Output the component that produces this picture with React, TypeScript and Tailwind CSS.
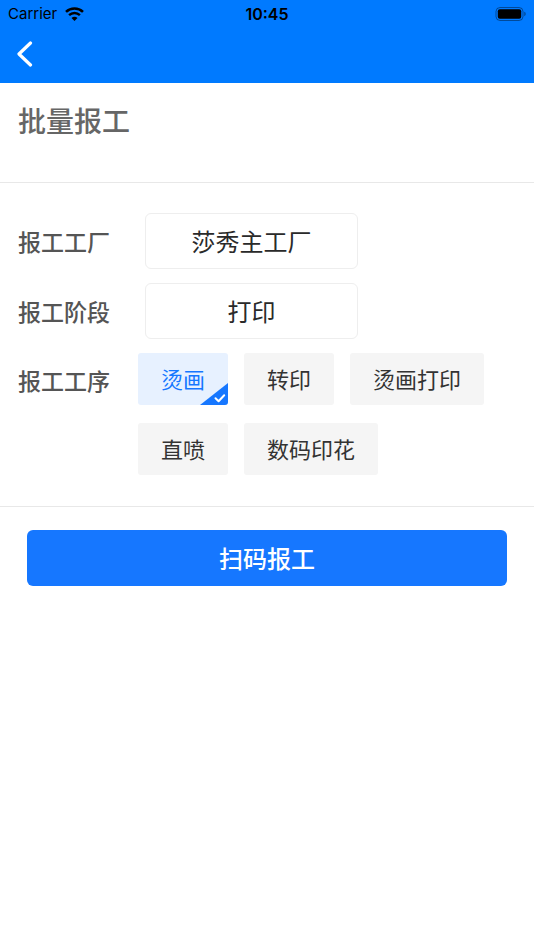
import { useState } from "react";

type Processo = {
  id: number;
  nome: string;
};

/**
 * Processos disponíveis para a etapa atual.
 */
const PROCESSOS: Processo[] = [
  { id: 1, nome: "烫画" },
  { id: 2, nome: "转印" },
  { id: 3, nome: "烫画打印" },
  { id: 4, nome: "直喷" },
  { id: 5, nome: "数码印花" },
];

/**
 * Barra de status do aparelho: operadora, hora e bateria.
 */
function StatusBar() {
  return (
    <div className="grid h-7 grid-cols-3 items-center px-2 font-['Inter','Liberation_Sans',sans-serif] text-[15px] text-black">
      <div className="flex items-center gap-2">
        <span>Carrier</span>
        <svg width="19" height="14" viewBox="0 0 19 14" fill="none" aria-hidden="true">
          <path d="M1 4.9C5.8 0.4 13.2 0.4 18 4.9" stroke="currentColor" strokeWidth="2.6" />
          <path d="M4.1 8.2C7.1 5.3 11.9 5.3 14.9 8.2" stroke="currentColor" strokeWidth="2.4" />
          <path d="M9.5 14L6.5 10.9C8.2 9.4 10.8 9.4 12.5 10.9Z" fill="currentColor" />
        </svg>
      </div>
      <span className="text-center text-base font-semibold">10:45</span>
      <svg
        className="justify-self-end"
        width="31"
        height="14"
        viewBox="0 0 31 14"
        fill="none"
        aria-hidden="true"
      >
        <rect x="1" y="0.5" width="27" height="13" rx="4" stroke="black" strokeOpacity="0.4" />
        <rect x="2.8" y="2.3" width="23.4" height="9.4" rx="2" fill="black" />
        <path d="M29.3 4.8C31.1 5.4 31.1 8.6 29.3 9.2Z" fill="black" fillOpacity="0.45" />
      </svg>
    </div>
  );
}

function PickerRow({ id, label, value }: { id: string; label: string; value: string }) {
  return (
    <div className="flex items-center">
      <label
        htmlFor={id}
        className="w-[127px] shrink-0 text-[23px] leading-[54px] font-medium text-[#555]"
      >
        {label}
      </label>
      <button
        id={id}
        type="button"
        className="h-14 w-[213px] rounded-md border border-[#eee] bg-white text-2xl text-[#2a2a2a]"
      >
        {value}
      </button>
    </div>
  );
}

export default function App() {
  const [processo, setProcesso] = useState(1);

  return (
    <div className="min-h-screen bg-white font-['Noto_Sans_CJK_SC',sans-serif]">
      <header className="bg-[#007aff]">
        <StatusBar />
        <div className="flex h-[55px] items-center px-4 pb-[3px]">
          <button type="button" aria-label="返回" className="text-white">
            <svg width="17" height="26" viewBox="0 0 17 26" fill="none" aria-hidden="true">
              <path
                d="M14.5 2L3 13L14.5 24"
                stroke="currentColor"
                strokeWidth="3.2"
                strokeLinecap="round"
                strokeLinejoin="round"
              />
            </svg>
          </button>
        </div>
      </header>

      <main>
        <div className="h-[100px] border-b border-[#e8e8e8] px-[18px] pt-[17px]">
          <h1 className="text-[28px] leading-10 font-medium text-[#666]">批量报工</h1>
        </div>

        <form className="flex flex-col gap-3.5 border-b border-[#e8e8e8] px-[18px] pt-[30px] pb-[31px]">
          <PickerRow id="factory" label="报工工厂" value="莎秀主工厂" />
          <PickerRow id="stage" label="报工阶段" value="打印" />

          {/* Processos: apenas um pode ficar marcado */}
          <fieldset className="flex items-start" aria-labelledby="process-label">
            <span
              id="process-label"
              className="w-[120px] shrink-0 text-[23px] leading-[54px] font-medium text-[#555]"
            >
              报工工序
            </span>
            <div className="flex flex-1 flex-wrap gap-x-4 gap-y-[18px]">
              {PROCESSOS.map((item) => {
                const checked = item.id === processo;

                return (
                  <label
                    key={item.id}
                    className={
                      checked
                        ? "relative flex h-[52px] cursor-pointer items-center overflow-hidden rounded-[3px] bg-[#e7f1ff] px-[23px] pb-px text-[22px] text-[#1677ff]"
                        : "relative flex h-[52px] cursor-pointer items-center overflow-hidden rounded-[3px] bg-[#f5f5f5] px-[23px] pb-px text-[22px] text-[#333]"
                    }
                  >
                    <input
                      type="radio"
                      name="process"
                      className="sr-only"
                      checked={checked}
                      onChange={() => setProcesso(item.id)}
                    />
                    {item.nome}
                    {checked && (
                      <svg
                        className="absolute right-0 bottom-0"
                        width="28"
                        height="22"
                        viewBox="0 0 28 22"
                        fill="none"
                        aria-hidden="true"
                      >
                        <path d="M28 0V22H0Z" fill="#1677ff" />
                        <path
                          d="M15.5 15.2L18.6 18.2L24.2 12.2"
                          stroke="white"
                          strokeWidth="2"
                          strokeLinecap="round"
                          strokeLinejoin="round"
                        />
                      </svg>
                    )}
                  </label>
                );
              })}
            </div>
          </fieldset>
        </form>

        <div className="px-[27px] pt-[23px]">
          <button
            type="button"
            className="h-14 w-full rounded-md bg-[#1677ff] text-2xl font-medium text-white"
          >
            扫码报工
          </button>
        </div>
      </main>
    </div>
  );
}
